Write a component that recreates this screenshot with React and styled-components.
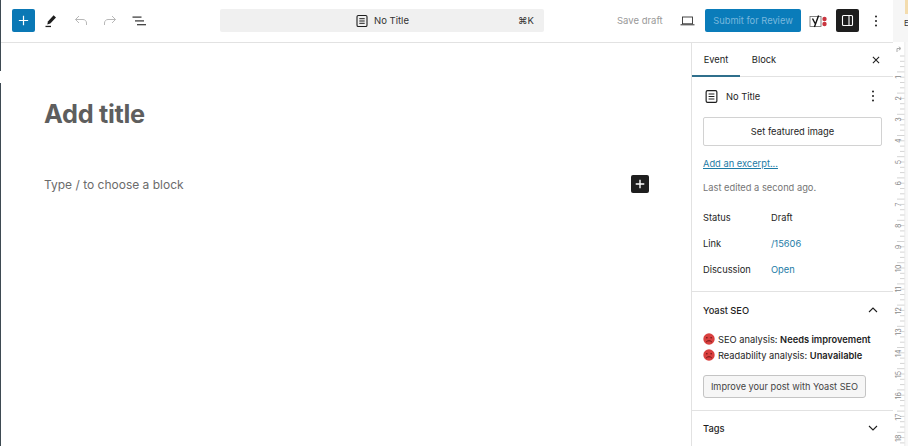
import React from "react";
import styled, { createGlobalStyle } from "styled-components";

const Global = createGlobalStyle`
  html, body { margin: 0; padding: 0; background: #fff; }
  body { font-family: Inter, "Liberation Sans", sans-serif; color: #1e1e1e; }
  * { box-sizing: border-box; }
`;

const Page = styled.div`
  position: relative;
  width: 908px;
  height: 446px;
  display: flex;
  overflow: hidden;
  background: #fff;
`;
const EdgeMark = styled.div`
  position: absolute;
  left: 0;
  top: ${(p) => p.$top}px;
  width: 1px;
  height: ${(p) => p.$height}px;
  background: #3e4a52;
`;
const Editor = styled.div`
  width: 893px;
  display: flex;
  flex-direction: column;
`;
const Header = styled.header`
  height: 43px;
  flex: none;
  display: flex;
  align-items: center;
  border-bottom: 1px solid #e2e2e2;
  padding-bottom: 1px;
`;
const LeftTools = styled.div`
  width: 220px;
  padding-left: 12px;
  display: flex;
  align-items: center;
`;
const IconSlot = styled.div`
  width: ${(p) => p.$w || 24}px;
  height: 24px;
  display: flex;
  align-items: center;
  justify-content: center;
  margin-left: ${(p) => p.$ml || 0}px;
  color: ${(p) => p.$color || "#1e1e1e"};
  flex: none;
`;
const InserterButton = styled.div`
  width: 23px;
  height: 23px;
  background: #0a78b5;
  border-radius: 2px;
  display: flex;
  align-items: center;
  justify-content: center;
  color: #fff;
`;
const CommandBar = styled.div`
  width: 324px;
  height: 23px;
  background: #f0f0f0;
  border-radius: 2px;
  display: flex;
  align-items: center;
  position: relative;
  justify-content: center;
  font-size: 9.5px;
  color: #333;
  gap: 5px;
`;
const Shortcut = styled.span`
  position: absolute;
  right: 10px;
  font-size: 9.5px;
  color: #333;
`;
const RightTools = styled.div`
  flex: 1;
  display: flex;
  align-items: center;
  padding-left: 73px;
`;
const SaveDraft = styled.span`
  font-size: 9.5px;
  color: #999;
  width: 45px;
  white-space: nowrap;
`;
const SubmitButton = styled.div`
  width: 96px;
  height: 23px;
  margin-left: 6px;
  background: #0a7cba;
  border-radius: 2px;
  color: #79b8dd;
  font-size: 9.3px;
  display: flex;
  align-items: center;
  justify-content: center;
  white-space: nowrap;
`;
const SidebarToggle = styled.div`
  width: 23px;
  height: 23px;
  margin-left: 8px;
  background: #1e1e1e;
  border-radius: 2px;
  display: flex;
  align-items: center;
  justify-content: center;
`;
const Body = styled.div`
  flex: 1;
  display: flex;
  min-height: 0;
`;
const Canvas = styled.main`
  flex: 1;
  padding: 55px 44px 0;
  position: relative;
`;
const Title = styled.h1`
  margin: 0;
  font-size: 25.3px;
  line-height: 32px;
  font-weight: 700;
  color: #5e5e5e;
  letter-spacing: -0.3px;
`;
const BlockRow = styled.div`
  margin-top: 42px;
  height: 24px;
  display: flex;
  align-items: center;
  justify-content: space-between;
  font-size: 12px;
  color: #6b6b6b;
`;
const BlockAdd = styled.div`
  width: 18px;
  height: 18px;
  background: #1e1e1e;
  border-radius: 2px;
  color: #fff;
  display: flex;
  align-items: center;
  justify-content: center;
  margin-right: -2px;
`;
const Sidebar = styled.aside`
  width: 202px;
  flex: none;
  border-left: 1px solid #e2e2e2;
  font-size: 9.3px;
`;
const Tabs = styled.div`
  height: 34px;
  display: flex;
  align-items: stretch;
  border-bottom: 1px solid #e2e2e2;
  position: relative;
`;
const Tab = styled.div`
  width: ${(p) => p.$w}px;
  display: flex;
  align-items: center;
  justify-content: center;
  margin-bottom: -1px;
  border-bottom: 2px solid ${(p) => (p.$active ? "#2f6f8c" : "transparent")};
`;
const TabClose = styled.div`
  margin-left: auto;
  margin-right: 5px;
  width: 24px;
  display: flex;
  align-items: center;
  justify-content: center;
`;
const Panel = styled.section`
  padding: ${(p) => p.$pad};
  border-bottom: ${(p) => (p.$noBorder ? "none" : "1px solid #e2e2e2")};
`;
const DocRow = styled.div`
  display: flex;
  align-items: center;
  height: 24px;
  gap: 7px;
  font-weight: 400;
  margin-top: -1px;
  padding-left: 1px;
`;
const DocMenu = styled.div`
  margin-left: auto;
  margin-right: 7px;
  display: flex;
`;
const FeaturedButton = styled.div`
  margin-top: 9px;
  width: 179px;
  height: 29px;
  border: 1px solid #d2d2d2;
  border-radius: 2px;
  display: flex;
  align-items: center;
  justify-content: center;
`;
const ExcerptLink = styled.a`
  display: block;
  margin-top: 12px;
  line-height: 12px;
  color: #1d7ba6;
  text-decoration: underline;
`;
const Muted = styled.p`
  margin: 12px 0 0;
  line-height: 12px;
  color: #757575;
`;
const MetaList = styled.div`
  margin-top: 18px;
  display: flex;
  flex-direction: column;
  gap: 14px;
`;
const MetaRow = styled.div`
  display: flex;
  line-height: 12px;
`;
const MetaLabel = styled.span`
  width: 68px;
`;
const MetaValue = styled.span`
  color: ${(p) => (p.$link ? "#1d7ba6" : "#1e1e1e")};
`;
const PanelHead = styled.div`
  display: flex;
  align-items: center;
  justify-content: space-between;
  height: 24px;
  font-weight: 500;
  padding-right: 4px;
`;
const ScoreList = styled.div`
  margin-top: 9px;
`;
const Score = styled.div`
  display: flex;
  align-items: center;
  gap: 3px;
  height: 16px;
  white-space: nowrap;
  b { font-weight: 600; }
`;
const YoastButton = styled.div`
  margin-top: 12px;
  width: 163px;
  height: 23px;
  background: #f6f6f6;
  border: 1px solid #c4c4c4;
  border-radius: 3px;
  display: flex;
  align-items: center;
  justify-content: center;
  white-space: nowrap;
  font-size: 9.2px;
  color: #444;
`;
const Ruler = styled.div`
  width: 15px;
  flex: none;
  display: flex;
  flex-direction: column;
`;
const RulerCap = styled.div`
  height: 42px;
  background: #f6f6f6;
  position: relative;
`;
const Peek = styled.span`
  position: absolute;
  left: 11px;
  top: 18px;
  font-size: 8px;
  color: #333;
`;
const PeekTab = styled.div`
  position: absolute;
  right: 0;
  top: 0;
  width: 3px;
  height: 14px;
  background: #f3dcae;
`;

const Doc = ({ size = 14 }) => (
  <svg width={size} height={size} viewBox="0 0 14 14" fill="none" stroke="currentColor">
    <rect x="2" y="1.5" width="10" height="11" rx="1.3" strokeWidth="1.1" />
    <path d="M4.3 4.7h5.4M4.3 7h5.4M4.3 9.3h5.4" strokeWidth="1" />
  </svg>
);
const Plus = ({ s = 13, w = 1.3 }) => (
  <svg width={s} height={s} viewBox="0 0 14 14" stroke="currentColor" strokeWidth={w}>
    <path d="M7 2v10M2 7h10" />
  </svg>
);
const Kebab = () => (
  <svg width="4" height="14" viewBox="0 0 4 14" fill="#1e1e1e">
    <circle cx="2" cy="2.5" r="1" />
    <circle cx="2" cy="7" r="1" />
    <circle cx="2" cy="11.5" r="1" />
  </svg>
);
const Chevron = ({ up }) => (
  <svg width="10" height="6" viewBox="0 0 10 6" fill="none" stroke="#1e1e1e" strokeWidth="1.1">
    <path d={up ? "M1 5l4-4 4 4" : "M1 1l4 4 4-4"} />
  </svg>
);
const Sad = () => (
  <svg width="12" height="12" viewBox="0 0 12 12">
    <circle cx="6" cy="6" r="5.7" fill="#d9403f" />
    <rect x="3.1" y="3.9" width="1.5" height="1.5" rx="0.7" fill="#6e1414" />
    <rect x="7.4" y="3.9" width="1.5" height="1.5" rx="0.7" fill="#6e1414" />
    <path d="M3.2 9c1.4-1.7 4.2-1.7 5.6 0" fill="none" stroke="#6e1414" strokeWidth="1" />
  </svg>
);

const rulerNumbers = Array.from({ length: 18 }, (_, i) => i + 1);
const RulerDrawing = () => (
  <svg width="15" height="404" viewBox="0 0 15 404" style={{ display: "block" }}>
    <rect x="0" y="0" width="15" height="404" fill="#fff" />
    <rect x="11.5" y="0" width="1" height="404" fill="#e4e4e4" />
    <rect x="12.5" y="0" width="2.5" height="404" fill="#f8f8f8" />
    <path d="M4 10V6.5h3M5.8 4.8L8 6.5 5.8 8.2" fill="none" stroke="#aaa" strokeWidth="1" />
    {Array.from({ length: 76 }, (_, i) => {
      const y = 13.5 + i * 5.3;
      const major = i % 4 === 3;
      return (
        <rect key={i} x={major ? 4 : 7} y={y} width={major ? 7.5 : 4.5} height="1" fill="#d4d4d4" />
      );
    })}
    {rulerNumbers.map((n) => {
      const y = 35 + (n - 1) * 21.25;
      return (
        <text
          key={n}
          x="0"
          y="0"
          transform={`translate(7.5 ${y}) rotate(-90)`}
          fontSize="7"
          fill="#8a8a8a"
          textAnchor="middle"
          fontFamily="Inter, sans-serif"
        >
          {n}
        </text>
      );
    })}
  </svg>
);

export default function App() {
  return (
    <Page>
      <Global />
      <EdgeMark $top={0} $height={71} />
      <EdgeMark $top={83} $height={363} />
      <Editor>
        <Header>
          <LeftTools>
            <InserterButton>
              <Plus />
            </InserterButton>
            <IconSlot $ml={4}>
              <svg width="14" height="14" viewBox="0 0 14 14" fill="#1e1e1e">
                <path d="M9.6 1.3l2.4 2.2-5.7 6-3 .9.6-3z" />
                <rect x="1.5" y="11.8" width="5.5" height="1.3" />
              </svg>
            </IconSlot>
            <IconSlot $ml={6} $color="#b8b8b8">
              <svg width="14" height="12" viewBox="0 0 14 12" fill="none" stroke="currentColor" strokeWidth="1">
                <path d="M5 1L1.5 4.5 5 8M1.5 4.5H9c2 0 3.5 1.5 3.5 3.5v2" />
              </svg>
            </IconSlot>
            <IconSlot $ml={5} $color="#b8b8b8">
              <svg width="14" height="12" viewBox="0 0 14 12" fill="none" stroke="currentColor" strokeWidth="1">
                <path d="M9 1l3.5 3.5L9 8M12.5 4.5H5C3 4.5 1.5 6 1.5 8v2" />
              </svg>
            </IconSlot>
            <IconSlot $ml={5}>
              <svg width="14" height="12" viewBox="0 0 14 12" fill="#333">
                <rect x="0.5" y="1.5" width="9" height="1.2" />
                <rect x="3" y="5.3" width="9" height="1.2" />
                <rect x="5" y="9.1" width="9" height="1.2" />
              </svg>
            </IconSlot>
          </LeftTools>
          <CommandBar>
            <IconSlot $w={14}>
              <Doc />
            </IconSlot>
            <span>No Title</span>
            <Shortcut>⌘K</Shortcut>
          </CommandBar>
          <RightTools>
            <SaveDraft>Save draft</SaveDraft>
            <IconSlot $ml={13}>
              <svg width="15" height="10" viewBox="0 0 15 10" fill="none" stroke="#333" strokeWidth="0.9">
                <rect x="2.5" y="1" width="10" height="6.8" />
                <path d="M0.5 8.8h14" strokeWidth="1" />
              </svg>
            </IconSlot>
            <SubmitButton>Submit for Review</SubmitButton>
            <IconSlot $ml={8} $w={19}>
              <svg width="19" height="14" viewBox="0 0 19 14">
                <rect x="1" y="2.5" width="11" height="10" fill="#fff" stroke="#666" strokeWidth="0.8" />
                <path d="M3.5 4.5l2.6 5M9.6 1.5L5.4 13" fill="none" stroke="#111" strokeWidth="1.4" />
                <circle cx="15.5" cy="5" r="2.2" fill="#c9353f" />
                <circle cx="15.5" cy="10" r="2.2" fill="#c9353f" />
              </svg>
            </IconSlot>
            <SidebarToggle>
              <svg width="13" height="13" viewBox="0 0 13 13" fill="none" stroke="#fff" strokeWidth="1.1">
                <rect x="1.5" y="1.5" width="10" height="10" rx="1" />
                <path d="M8 1.5v10" />
              </svg>
            </SidebarToggle>
            <IconSlot $ml={5}>
              <Kebab />
            </IconSlot>
          </RightTools>
        </Header>
        <Body>
          <Canvas>
            <Title>Add title</Title>
            <BlockRow>
              <span>Type / to choose a block</span>
              <BlockAdd>
                <Plus s={12} w={1.6} />
              </BlockAdd>
            </BlockRow>
          </Canvas>
          <Sidebar>
            <Tabs>
              <Tab $w={48} $active>Event</Tab>
              <Tab $w={48}>Block</Tab>
              <TabClose>
                <svg width="8" height="8" viewBox="0 0 9 9" stroke="#1e1e1e" strokeWidth="1.2">
                  <path d="M1 1l7 7M8 1L1 8" />
                </svg>
              </TabClose>
            </Tabs>
            <Panel $pad="8px 11px 15px 11px">
              <DocRow>
                <Doc size={15} />
                <span>No Title</span>
                <DocMenu>
                  <Kebab />
                </DocMenu>
              </DocRow>
              <FeaturedButton>Set featured image</FeaturedButton>
              <ExcerptLink>Add an excerpt...</ExcerptLink>
              <Muted>Last edited a second ago.</Muted>
              <MetaList>
                <MetaRow>
                  <MetaLabel>Status</MetaLabel>
                  <MetaValue>Draft</MetaValue>
                </MetaRow>
                <MetaRow>
                  <MetaLabel>Link</MetaLabel>
                  <MetaValue $link>/15606</MetaValue>
                </MetaRow>
                <MetaRow>
                  <MetaLabel>Discussion</MetaLabel>
                  <MetaValue $link>Open</MetaValue>
                </MetaRow>
              </MetaList>
            </Panel>
            <Panel $pad="6px 11px 12px 11px">
              <PanelHead>
                <span>Yoast SEO</span>
                <Chevron up />
              </PanelHead>
              <ScoreList>
                <Score>
                  <Sad />
                  <span>SEO analysis: <b>Needs improvement</b></span>
                </Score>
                <Score>
                  <Sad />
                  <span>Readability analysis: <b>Unavailable</b></span>
                </Score>
              </ScoreList>
              <YoastButton>Improve your post with Yoast SEO</YoastButton>
            </Panel>
            <Panel $pad="5px 11px" $noBorder>
              <PanelHead>
                <span>Tags</span>
                <Chevron />
              </PanelHead>
            </Panel>
          </Sidebar>
        </Body>
      </Editor>
      <Ruler>
        <RulerCap>
          <PeekTab />
          <Peek>E</Peek>
        </RulerCap>
        <RulerDrawing />
      </Ruler>
    </Page>
  );
}
